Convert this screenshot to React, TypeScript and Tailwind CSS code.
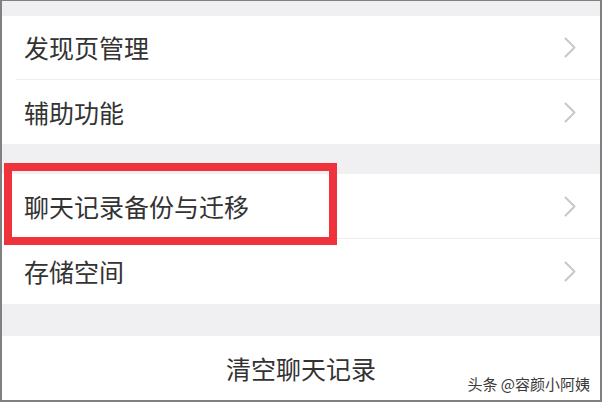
function Chevron() {
	return (
		<svg width="12" height="21" viewBox="0 0 12 21" fill="none" className="shrink-0">
			<polyline points="1.5,1.5 10.5,10.5 1.5,19.5" stroke="#c8c8c8" strokeWidth="2" strokeLinecap="round" strokeLinejoin="round" />
		</svg>
	);
}

function Row({ label, divider, tall }: { label: string; divider?: boolean; tall?: boolean }) {
	return (
		<div className={`flex flex-col bg-white ${tall ? "h-[65px]" : "h-16"}`}>
			<div className="flex flex-1 items-center justify-between pl-[22px] pr-[24px]">
				<span className="text-[25px] leading-none text-[#333]">{label}</span>
				<Chevron />
			</div>
			{divider && <div className="ml-[14px] h-px bg-[#ededed]" />}
		</div>
	);
}

export default function App() {
	return (
		<div
			className="relative flex h-[402px] w-[602px] flex-col overflow-hidden border-t border-r-2 border-b-2 border-l-2 border-[#808080] bg-white"
			style={{ fontFamily: '"Noto Sans CJK SC", "Noto Sans", sans-serif' }}
		>
			<div className="h-[15px] bg-[#f0f0f2]" />
			<Row label="发现页管理" divider />
			<Row label="辅助功能" />
			<div className="h-[30px] bg-[#f0f0f2]" />
			<Row label="聊天记录备份与迁移" divider tall />
			<Row label="存储空间" tall />
			<div className="h-[32px] bg-[#f0f0f2]" />
			<div className="flex h-16 items-center justify-center bg-white">
				<span className="text-[25px] leading-none text-[#333]">清空聊天记录</span>
			</div>

			{/* red highlight box */}
			<div className="absolute left-[2px] top-[162px] h-[82px] w-[333px] border-8 border-[#f0323c]" />

			{/* watermark */}
			<span className="absolute bottom-[9px] right-[10px] text-[15px] leading-none text-[#3a3a3a] [text-shadow:0_0_2px_#fff]">
				头条 @容颜小阿姨
			</span>
		</div>
	);
}
